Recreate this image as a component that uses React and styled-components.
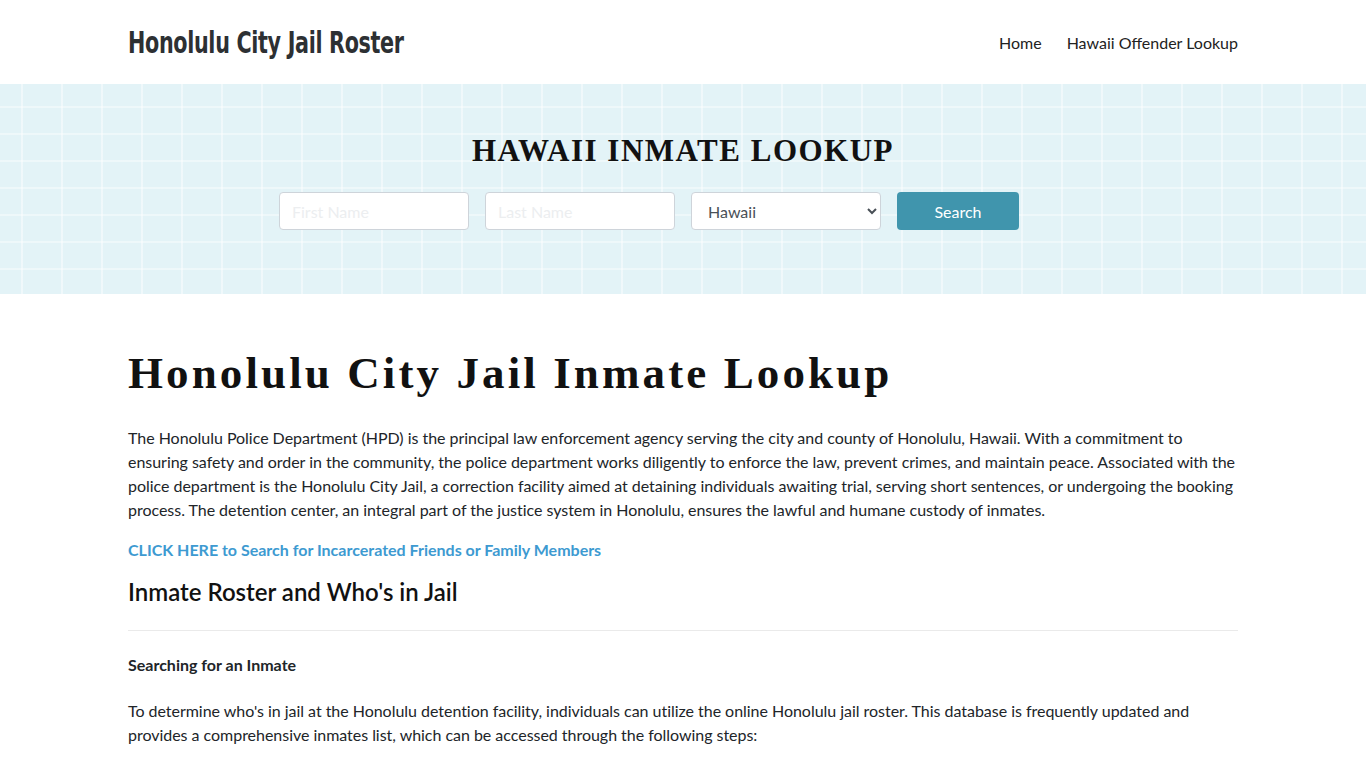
import styled, { createGlobalStyle } from "styled-components";

const GlobalStyle = createGlobalStyle`
  body {
    margin: 0;
    background: #fff;
    font-family: Lato, "Open Sans", sans-serif;
    color: #212529;
  }
  * { box-sizing: border-box; }
`;

const Container = styled.div`
  width: 1110px;
  margin: 0 auto;
`;

const Header = styled.header`
  height: 84px;
  background: #fff;
`;

const HeaderInner = styled(Container)`
  height: 100%;
  display: flex;
  align-items: center;
  justify-content: space-between;
`;

const SiteTitle = styled.a`
  display: inline-block;
  font-family: "DejaVu Sans", sans-serif;
  font-weight: 700;
  font-size: 31px;
  color: #2d3033;
  text-decoration: none;
  letter-spacing: -0.5px;
  transform: scaleX(0.668);
  transform-origin: left center;
  white-space: nowrap;
  width: 280px;
`;

const Nav = styled.nav`
  display: flex;
  gap: 25px;
`;

const NavLink = styled.a`
  font-size: 16px;
  color: #222;
  text-decoration: none;
`;

const Banner = styled.section`
  height: 210px;
  background-color: #e3f3f7;
  background-image:
    repeating-linear-gradient(90deg, transparent 0 21px, rgba(255,255,255,0.45) 21px 23px, transparent 23px 40px),
    repeating-linear-gradient(0deg, transparent 0 24px, rgba(255,255,255,0.4) 24px 26px, transparent 26px 27px);
  display: flex;
  flex-direction: column;
  align-items: center;
  padding-top: 49px;
`;

const BannerTitle = styled.h2`
  margin: 0 0 23px;
  font-family: "Liberation Serif", "DejaVu Serif", serif;
  font-weight: 700;
  font-size: 31px;
  letter-spacing: 1.5px;
  color: #111;
`;

const SearchForm = styled.form`
  display: flex;
  gap: 16px;
  margin-right: 68px;
`;

const Field = styled.input`
  width: 190px;
  height: 38px;
  border: 1px solid #ced4da;
  border-radius: 4px;
  padding: 0 12px;
  font-family: Lato, sans-serif;
  font-size: 16px;
  background: #fff;
  &::placeholder { color: #eceef0; }
`;

const Select = styled.select`
  width: 190px;
  height: 38px;
  border: 1px solid #ced4da;
  border-radius: 4px;
  padding: 0 12px;
  font-family: Lato, sans-serif;
  font-size: 16px;
  color: #495057;
  background: #fff;
`;

const SearchButton = styled.button`
  width: 122px;
  height: 38px;
  border: none;
  border-radius: 4px;
  background: #4095ad;
  color: #fff;
  font-family: Lato, sans-serif;
  font-size: 16px;
`;

const Main = styled(Container)`
  padding-top: 52px;
`;

const Title = styled.h1`
  margin: 0 0 26px;
  font-family: "Liberation Serif", "DejaVu Serif", serif;
  font-weight: 700;
  font-size: 45px;
  letter-spacing: 3.1px;
  color: #111;
  line-height: 1.2;
`;

const Paragraph = styled.p`
  margin: 0 0 16px;
  font-size: 16px;
  line-height: 24px;
  letter-spacing: -0.03px;
  color: #212529;
`;

const BoldLink = styled.a`
  display: block;
  margin-bottom: 16px;
  font-size: 16px;
  line-height: 24px;
  font-weight: 700;
  color: #3d9ad1;
  text-decoration: none;
`;

const SubTitle = styled.h2`
  margin: 0;
  font-size: 24px;
  font-weight: 600;
  line-height: 1.2;
  color: #111;
`;

const Rule = styled.hr`
  margin: 23px 0 22px;
  border: 0;
  border-top: 1px solid #eaeaea;
`;

const Label = styled.p`
  margin: 0 0 22px;
  font-size: 16px;
  font-weight: 700;
  line-height: 24px;
`;

export default function App() {
  return (
    <>
      <GlobalStyle />
      <Header>
        <HeaderInner>
          <SiteTitle href="#">Honolulu City Jail Roster</SiteTitle>
          <Nav>
            <NavLink href="#">Home</NavLink>
            <NavLink href="#">Hawaii Offender Lookup</NavLink>
          </Nav>
        </HeaderInner>
      </Header>
      <Banner>
        <BannerTitle>HAWAII INMATE LOOKUP</BannerTitle>
        <SearchForm onSubmit={(e) => e.preventDefault()}>
          <Field placeholder="First Name" />
          <Field placeholder="Last Name" />
          <Select defaultValue="Hawaii">
            <option>Hawaii</option>
          </Select>
          <SearchButton type="submit">Search</SearchButton>
        </SearchForm>
      </Banner>
      <Main>
        <Title>Honolulu City Jail Inmate Lookup</Title>
        <Paragraph>
          The Honolulu Police Department (HPD) is the principal law enforcement agency serving the city and county of Honolulu, Hawaii. With a commitment to ensuring safety and order in the community, the police department works diligently to enforce the law, prevent crimes, and maintain peace. Associated with the police department is the Honolulu City Jail, a correction facility aimed at detaining individuals awaiting trial, serving short sentences, or undergoing the booking process. The detention center, an integral part of the justice system in Honolulu, ensures the lawful and humane custody of inmates.
        </Paragraph>
        <BoldLink href="#">CLICK HERE to Search for Incarcerated Friends or Family Members</BoldLink>
        <SubTitle>Inmate Roster and Who's in Jail</SubTitle>
        <Rule />
        <Label>Searching for an Inmate</Label>
        <Paragraph>
          To determine who's in jail at the Honolulu detention facility, individuals can utilize the online Honolulu jail roster. This database is frequently updated and provides a comprehensive inmates list, which can be accessed through the following steps:
        </Paragraph>
      </Main>
    </>
  );
}
